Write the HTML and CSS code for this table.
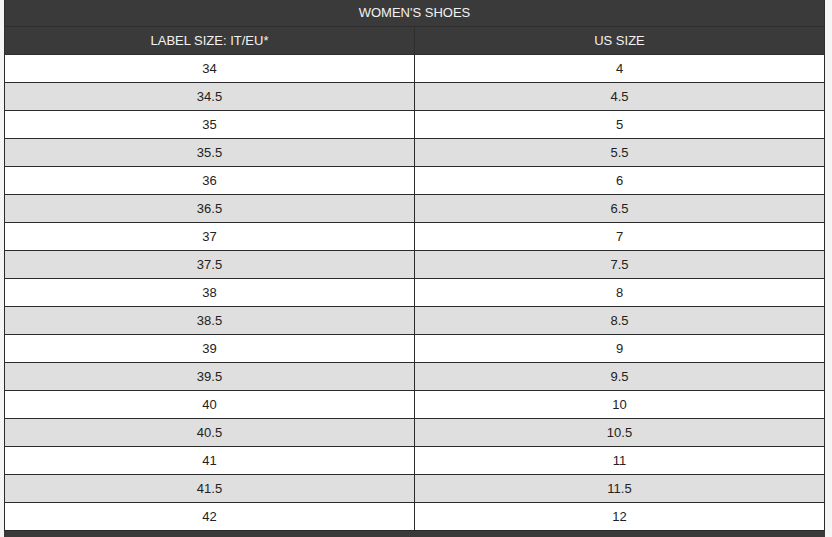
FILE: index.html
```html
<!DOCTYPE html>
<html>
<head>
<meta charset="utf-8">
<link rel="stylesheet" href="styles.css">
</head>
<body>
<table class="size-table">
  <thead>
    <tr class="title-row"><th colspan="2">WOMEN'S SHOES</th></tr>
    <tr class="head-row"><th>LABEL SIZE: IT/EU*</th><th>US SIZE</th></tr>
  </thead>
  <tbody>
    <tr><td>34</td><td>4</td></tr>
    <tr><td>34.5</td><td>4.5</td></tr>
    <tr><td>35</td><td>5</td></tr>
    <tr><td>35.5</td><td>5.5</td></tr>
    <tr><td>36</td><td>6</td></tr>
    <tr><td>36.5</td><td>6.5</td></tr>
    <tr><td>37</td><td>7</td></tr>
    <tr><td>37.5</td><td>7.5</td></tr>
    <tr><td>38</td><td>8</td></tr>
    <tr><td>38.5</td><td>8.5</td></tr>
    <tr><td>39</td><td>9</td></tr>
    <tr><td>39.5</td><td>9.5</td></tr>
    <tr><td>40</td><td>10</td></tr>
    <tr><td>40.5</td><td>10.5</td></tr>
    <tr><td>41</td><td>11</td></tr>
    <tr><td>41.5</td><td>11.5</td></tr>
    <tr><td>42</td><td>12</td></tr>
  </tbody>
  <tfoot>
    <tr class="foot-row"><td colspan="2"></td></tr>
  </tfoot>
</table>
</body>
</html>
```

FILE: styles.css
```css
html, body {
  margin: 0;
  padding: 0;
  background: #f5f5f5;
}
body {
  padding: 0 4px;
  font-family: "Liberation Sans", Arial, sans-serif;
  font-size: 13px;
}
.size-table {
  width: 821px;
  border-collapse: collapse;
  table-layout: fixed;
}
.size-table th {
  background: #3a3a3a;
  color: #f2f2f2;
  font-weight: normal;
  text-align: center;
  padding: 0;
  border: 1px solid #2e2e2e;
}
.title-row th {
  height: 24px;
  padding-bottom: 2px;
  border-top: none;
}
.head-row th {
  height: 27px;
}
.size-table td {
  height: 27px;
  padding: 0;
  text-align: center;
  color: #222;
  background: #fff;
  border: 1px solid #2b2b2b;
}
.size-table tbody tr:nth-child(even) td {
  background: #dfdfdf;
}
.foot-row td {
  height: 7px;
  background: #3a3a3a;
  border-color: #3a3a3a;
}
```
